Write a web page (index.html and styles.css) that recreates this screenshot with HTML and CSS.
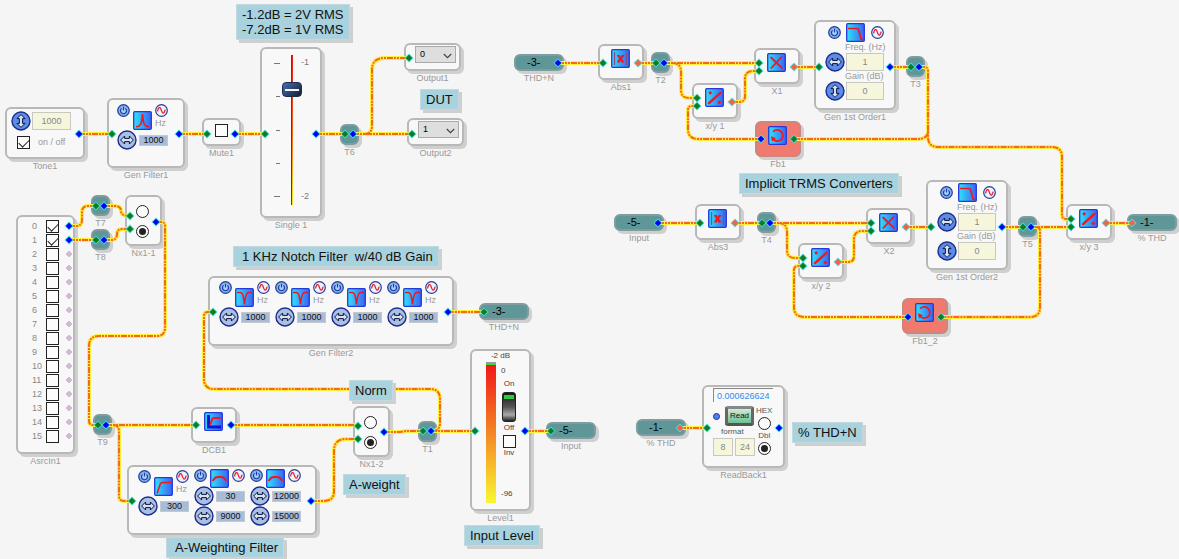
FILE: index.html
```html
<!DOCTYPE html>
<html lang="en">
<head>
<meta charset="utf-8">
<title>Signal schematic</title>
<link rel="stylesheet" href="styles.css">
</head>
<body>
<svg class="defs" aria-hidden="true">
  <defs>
    <linearGradient id="sq" x1="0" y1="0" x2="1" y2="0"><stop offset="0" stop-color="#2fe4f8"/><stop offset="1" stop-color="#3c62f4"/></linearGradient>
    <radialGradient id="pw"><stop offset="0" stop-color="#b4dcfa"/><stop offset="1" stop-color="#6aa4ee"/></radialGradient>
    <symbol id="power" viewBox="0 0 13 13"><circle cx="6.5" cy="6.5" r="5.8" fill="url(#pw)" stroke="#2a3c96" stroke-width="1.2"/><path d="M4.6 4.4a3 3 0 1 0 3.8 0M6.5 2.8v3.6" fill="none" stroke="#20389c" stroke-width="1.1"/></symbol>
    <symbol id="sine" viewBox="0 0 13 13"><circle cx="6.5" cy="6.5" r="5.8" fill="#eaf2ff" stroke="#2a3c96" stroke-width="1.2"/><path d="M2.6 7.4C3.2 3 5 2.4 6 5.4S8.4 12 10.2 5.6" fill="none" stroke="#f01c24" stroke-width="1.3"/></symbol>
    <symbol id="horiz" viewBox="0 0 20 20"><circle cx="10" cy="10" r="9" stroke="#1c2c8e" stroke-width="1.4"/><path d="M3.6 10 7.6 6v2.400h4.800V6l4 4-4 4v-2.400H7.600V14Z" fill="#d4e2f4" stroke="#0c1440" stroke-width="1"/></symbol>
    <symbol id="vert" viewBox="0 0 20 20"><circle cx="10" cy="10" r="9" stroke="#1c2c8e" stroke-width="1.4"/><path d="M10 3.600 14 7.600h-2.400v4.800H14l-4 4-4-4h2.400V7.600H6Z" fill="#d4e2f4" stroke="#0c1440" stroke-width="1"/></symbol>
    <symbol id="tile" viewBox="0 0 19 19"><rect x=".7" y=".7" width="17.6" height="17.6" rx="1" fill="url(#sq)" stroke="#2438dc" stroke-width="1.3"/></symbol>
    <symbol id="peak" viewBox="0 0 19 19"><use href="#tile"/><path d="M3 15.800c4.500-.3 5.700-2 6.500-12.800.8 10.800 2 12.500 6.500 12.800" fill="none" stroke="#f01820" stroke-width="1.6"/></symbol>
    <symbol id="notch" viewBox="0 0 19 19"><use href="#tile"/><path d="M2 4.500h3.600c2 0 3 3 3.900 12 .9-9 1.900-12 3.900-12H17" fill="none" stroke="#f01820" stroke-width="1.700"/></symbol>
    <symbol id="highpass" viewBox="0 0 19 19"><use href="#tile"/><path d="M3 16.500 6.500 6.600Q7 5.500 8.500 5.500H17" fill="none" stroke="#f01820" stroke-width="1.600"/></symbol>
    <symbol id="arch" viewBox="0 0 19 19"><use href="#tile"/><path d="M2.500 12Q5 8 7.500 8h4Q14 8 16.500 12" fill="none" stroke="#f01820" stroke-width="1.800"/></symbol>
    <symbol id="lowpass" viewBox="0 0 19 19"><use href="#tile"/><path d="M2 5.500h8.500Q12.500 5.500 13 8l2 8 2 .8" fill="none" stroke="#f01820" stroke-width="1.700"/></symbol>
    <symbol id="dcb" viewBox="0 0 19 19"><use href="#tile"/><path d="M4.500 3v12H17" fill="none" stroke="#0a14d4" stroke-width="3"/><path d="M6 13.500 8.200 7Q8.500 6 10 6h6.500" fill="none" stroke="#f01820" stroke-width="2"/></symbol>
    <symbol id="abs" viewBox="0 0 19 19"><use href="#tile"/><path d="M3.500 3v13M15.500 3v13" stroke="#80508c" stroke-width="1.300"/><path d="M7.200 6.500 12 13M12 6.500 7.200 13" stroke="#f01820" stroke-width="2.200"/><path d="M6 6.500h3M10.500 6.500h2.700M6 13h2.700M10.300 13h3" stroke="#f01820" stroke-width="1.200"/></symbol>
    <symbol id="times" viewBox="0 0 19 19"><use href="#tile"/><path d="M3.500 4 15.500 15.500M15 3.500 3.800 15.500" stroke="#f01820" stroke-width="1.800"/></symbol>
    <symbol id="divide" viewBox="0 0 19 19"><use href="#tile"/><path d="M4 15.200 15.500 4.800" stroke="#f01820" stroke-width="2.400" stroke-linecap="round"/><circle cx="5.200" cy="4.800" r="1.600" fill="#f01820"/><circle cx="14.300" cy="14.300" r="1.600" fill="#f01820"/></symbol>
    <symbol id="loop" viewBox="0 0 19 19"><use href="#tile"/><path d="M5.300 5.600a5.600 5.600 0 1 1-.6 7.200" fill="none" stroke="#f01820" stroke-width="1.700"/><path d="M2.800 10.200 8 12.200 4 15.600Z" fill="#f01820"/></symbol>
    <symbol id="chev" viewBox="0 0 9 6"><path d="M.8 1 4.500 4.700 8.200 1" fill="none" stroke="#444" stroke-width="1.200"/></symbol>
    <path id="pin" d="M0-4.500 4.500 0 0 4.500-4.500 0Z"/>
    <path id="core" d="M0-3 3 0 0 3-3 0Z" stroke-width="1"/>
    <g id="g"><use href="#pin" fill="#38dcd0"/><use href="#core" fill="#147a1c" stroke="#147a1c" stroke-opacity=".5"/></g>
    <g id="b"><use href="#pin" fill="#38d8e8"/><use href="#core" fill="#0000fa" stroke="#0000fa" stroke-opacity=".5"/></g>
    <g id="r"><use href="#pin" fill="#60d4cc"/><use href="#core" fill="#f4604c" stroke="#f4604c" stroke-opacity=".5"/></g>
    <use id="l" href="#core" fill="#d2b8d4" stroke="#d2b8d4"/>
    <g id="wires">
      <path d="M79 134H112M179 134H207M235 134H265M316 134H345M353 134H412"/>
      <path d="M364 134Q372 134 372 126V70Q372 58 384 58H409"/>
      <path d="M69 226H76Q82 226 82 220V212Q82 206 88 206H96M69 240H96"/>
      <path d="M104 206H115Q121 206 121 211 121 216 130 216M104 240H111Q117 240 117 234 117 229 122 229H130"/>
      <path d="M156 222H161Q165 222 165 226V328Q165 336 157 336H99Q89 336 89 346V421Q89 425 93 425H98"/>
      <path d="M106 425H196M231 425H358M113 425Q119 425 119 431V496Q119 501 124 501H132"/>
      <path d="M311 501H324Q334 501 334 491V451Q334 439 346 439H358M384 432H400L406 431H423"/>
      <path d="M431 431H475M525 431H551M432 431Q440 431 440 423V399Q440 389 430 389H214Q204 389 204 379V316Q204 312 208 312H213M448 312H484"/>
      <path d="M558 63H603M638 63H656M664 63H759M672 63Q681 63 681 72V90Q681 98 689 98H697"/>
      <path d="M732 102H739Q745 102 745 96V79Q745 71 753 71H759M794 67H819M890 67H911"/>
      <path d="M919 67H924Q928 67 928 71V137Q928 147 938 147H1052Q1062 147 1062 157V215Q1062 219 1066 219H1071"/>
      <path d="M794 139H918Q928 139 928 131M761 139H698Q688 139 688 129V110Q688 106 692 106H697"/>
      <path d="M658 223H700M735 223H762M770 223H871M778 223Q787 223 787 232V250Q787 258 795 258H803"/>
      <path d="M838 262H848Q854 262 854 256V239Q854 231 862 231H871M906 227H931M1002 227H1023M1031 227H1071M1106 223H1132"/>
      <path d="M1036 227Q1040 227 1040 231V307Q1040 317 1030 317H941M908 317H804Q794 317 794 307V270Q794 266 798 266H803"/>
      <path d="M680 428H707"/>
    </g>
  </defs>
</svg>

<main class="canvas">
  <!-- Left: sources and level -->
  <section class="node tone1">
    <div class="box tone">
      <div class="line"><button class="knob full" aria-label="Tune Tone1"><svg><use href="#vert"/></svg></button><input class="field wide" value="1000" aria-label="Tone1 frequency"></div>
      <label class="line toggle"><input class="check" type="checkbox" checked><span>on / off</span></label>
    </div>
    <h2>Tone1</h2>
  </section>

  <section class="node gf1">
    <div class="box bands roomy">
      <div class="band">
        <div class="head"><button class="mini" aria-label="Power"><svg><use href="#power"/></svg></button><svg class="ico low"><use href="#peak"/></svg><div class="side"><button class="mini" aria-label="Sweep"><svg><use href="#sine"/></svg></button><span>Hz</span></div></div>
        <div class="line"><button class="knob" aria-label="Tune"><svg><use href="#horiz"/></svg></button><input class="value" value="1000" aria-label="Frequency"></div>
      </div>
    </div>
    <h2>Gen Filter1</h2>
  </section>

  <section class="node mute1"><div class="box center"><input class="check" type="checkbox" aria-label="Mute"></div><h2>Mute1</h2></section>

  <section class="node single1">
    <div class="box fader">
      <div class="ticks"><i class="long"></i><i></i><i></i><i></i><i class="long"></i></div>
      <input class="slide" type="range" min="-2" max="-1" step="0.1" value="-1.2" aria-label="Single 1 level">
      <div class="marks"><span>-1</span><span>-2</span></div>
    </div>
    <h2>Single 1</h2>
  </section>

  <section class="node t t6"><div class="box"></div><h2>T6</h2></section>
  <section class="node output1"><div class="box out"><div class="pick"><select aria-label="Output1 channel"><option>0</option></select><svg><use href="#chev"/></svg></div></div><h2>Output1</h2></section>
  <section class="node output2"><div class="box out"><div class="pick"><select aria-label="Output2 channel"><option>1</option></select><svg><use href="#chev"/></svg></div></div><h2>Output2</h2></section>

  <section class="node asrc">
    <div class="box list">
      <label><span>0</span><input class="check" type="checkbox" checked></label>
      <label><span>1</span><input class="check" type="checkbox" checked></label>
      <label><span>2</span><input class="check" type="checkbox"></label>
      <label><span>3</span><input class="check" type="checkbox"></label>
      <label><span>4</span><input class="check" type="checkbox"></label>
      <label><span>5</span><input class="check" type="checkbox"></label>
      <label><span>6</span><input class="check" type="checkbox"></label>
      <label><span>7</span><input class="check" type="checkbox"></label>
      <label><span>8</span><input class="check" type="checkbox"></label>
      <label><span>9</span><input class="check" type="checkbox"></label>
      <label><span>10</span><input class="check" type="checkbox"></label>
      <label><span>11</span><input class="check" type="checkbox"></label>
      <label><span>12</span><input class="check" type="checkbox"></label>
      <label><span>13</span><input class="check" type="checkbox"></label>
      <label><span>14</span><input class="check" type="checkbox"></label>
      <label><span>15</span><input class="check" type="checkbox"></label>
    </div>
    <h2>AsrcIn1</h2>
  </section>

  <section class="node t t7"><div class="box"></div><h2>T7</h2></section>
  <section class="node t t8"><div class="box"></div><h2>T8</h2></section>
  <section class="node nx nx1"><div class="box"><input class="radio" type="radio" name="nx1" aria-label="Input A"><input class="radio" type="radio" name="nx1" aria-label="Input B" checked></div><h2>Nx1-1</h2></section>
  <section class="node nx nx2"><div class="box"><input class="radio" type="radio" name="nx2" aria-label="Input A"><input class="radio" type="radio" name="nx2" aria-label="Input B" checked></div><h2>Nx1-2</h2></section>

  <section class="node gf2">
    <div class="box bands">
      <div class="band">
        <div class="head"><button class="mini" aria-label="Power"><svg><use href="#power"/></svg></button><svg class="ico low"><use href="#notch"/></svg><div class="side"><button class="mini" aria-label="Sweep"><svg><use href="#sine"/></svg></button><span>Hz</span></div></div>
        <div class="line"><button class="knob" aria-label="Tune"><svg><use href="#horiz"/></svg></button><input class="value" value="1000" aria-label="Frequency 1"></div>
      </div>
      <div class="band">
        <div class="head"><button class="mini" aria-label="Power"><svg><use href="#power"/></svg></button><svg class="ico low"><use href="#notch"/></svg><div class="side"><button class="mini" aria-label="Sweep"><svg><use href="#sine"/></svg></button><span>Hz</span></div></div>
        <div class="line"><button class="knob" aria-label="Tune"><svg><use href="#horiz"/></svg></button><input class="value" value="1000" aria-label="Frequency 2"></div>
      </div>
      <div class="band">
        <div class="head"><button class="mini" aria-label="Power"><svg><use href="#power"/></svg></button><svg class="ico low"><use href="#notch"/></svg><div class="side"><button class="mini" aria-label="Sweep"><svg><use href="#sine"/></svg></button><span>Hz</span></div></div>
        <div class="line"><button class="knob" aria-label="Tune"><svg><use href="#horiz"/></svg></button><input class="value" value="1000" aria-label="Frequency 3"></div>
      </div>
      <div class="band">
        <div class="head"><button class="mini" aria-label="Power"><svg><use href="#power"/></svg></button><svg class="ico low"><use href="#notch"/></svg><div class="side"><button class="mini" aria-label="Sweep"><svg><use href="#sine"/></svg></button><span>Hz</span></div></div>
        <div class="line"><button class="knob" aria-label="Tune"><svg><use href="#horiz"/></svg></button><input class="value" value="1000" aria-label="Frequency 4"></div>
      </div>
    </div>
    <h2>Gen Filter2</h2>
  </section>

  <section class="node pill thdn-out"><div class="box">-3-</div><h2>THD+N</h2></section>
  <section class="node t t9"><div class="box"></div><h2>T9</h2></section>
  <section class="node op dcb1"><div class="box"><svg class="ico"><use href="#dcb"/></svg></div><h2>DCB1</h2></section>
  <section class="node t t1"><div class="box"></div><h2>T1</h2></section>

  <section class="node aw">
    <div class="box bands">
      <div class="band">
        <div class="head"><button class="mini" aria-label="Power"><svg><use href="#power"/></svg></button><svg class="ico low"><use href="#highpass"/></svg><div class="side"><button class="mini" aria-label="Sweep"><svg><use href="#sine"/></svg></button><span>Hz</span></div></div>
        <div class="line"><button class="knob" aria-label="Tune"><svg><use href="#horiz"/></svg></button><input class="value" value="300" aria-label="High pass frequency"></div>
      </div>
      <div class="band">
        <div class="head short"><button class="mini" aria-label="Power"><svg><use href="#power"/></svg></button><svg class="ico"><use href="#arch"/></svg><button class="mini" aria-label="Sweep"><svg><use href="#sine"/></svg></button></div>
        <div class="line"><button class="knob" aria-label="Tune low"><svg><use href="#horiz"/></svg></button><input class="value" value="30" aria-label="Low edge"></div>
        <div class="line"><button class="knob" aria-label="Tune high"><svg><use href="#horiz"/></svg></button><input class="value" value="9000" aria-label="High edge"></div>
      </div>
      <div class="band">
        <div class="head short"><button class="mini" aria-label="Power"><svg><use href="#power"/></svg></button><svg class="ico"><use href="#arch"/></svg><button class="mini" aria-label="Sweep"><svg><use href="#sine"/></svg></button></div>
        <div class="line"><button class="knob" aria-label="Tune low"><svg><use href="#horiz"/></svg></button><input class="value" value="12000" aria-label="Low edge"></div>
        <div class="line"><button class="knob" aria-label="Tune high"><svg><use href="#horiz"/></svg></button><input class="value" value="15000" aria-label="High edge"></div>
      </div>
    </div>
  </section>

  <section class="node level1">
    <div class="box level">
      <p>-2 dB</p>
      <div class="body">
        <div class="meter"></div>
        <div class="ctl">
          <span class="max">0</span>
          <span>On</span>
          <button class="rocker" aria-label="Level on or off"></button>
          <span>Off</span>
          <label><input class="check" type="checkbox">Inv</label>
          <span class="min">-96</span>
        </div>
      </div>
    </div>
    <h2>Level1</h2>
  </section>
  <section class="node pill input-out"><div class="box">-5-</div><h2>Input</h2></section>

  <!-- Right: implicit converters -->
  <section class="node pill thdn-in"><div class="box">-3-</div><h2>THD+N</h2></section>
  <section class="node op abs1"><div class="box"><svg class="ico"><use href="#abs"/></svg></div><h2>Abs1</h2></section>
  <section class="node t t2"><div class="box"></div><h2>T2</h2></section>
  <section class="node op xy1"><div class="box"><svg class="ico"><use href="#divide"/></svg></div><h2>x/y 1</h2></section>
  <section class="node op x1"><div class="box"><svg class="ico"><use href="#times"/></svg></div><h2>X1</h2></section>
  <section class="node gfo1">
    <div class="box order">
      <button class="mini" aria-label="Power"><svg><use href="#power"/></svg></button>
      <div class="top"><svg class="ico"><use href="#lowpass"/></svg><button class="mini" aria-label="Sweep"><svg><use href="#sine"/></svg></button></div>
      <label for="f1">Freq. (Hz)</label>
      <button class="knob full" aria-label="Tune frequency"><svg><use href="#horiz"/></svg></button><input class="field" id="f1" value="1">
      <label for="g1">Gain (dB)</label>
      <button class="knob full" aria-label="Tune gain"><svg><use href="#vert"/></svg></button><input class="field" id="g1" value="0">
    </div>
    <h2>Gen 1st Order1</h2>
  </section>
  <section class="node t t3"><div class="box"></div><h2>T3</h2></section>
  <section class="node op fb fb1"><div class="box"><svg class="ico"><use href="#loop"/></svg></div><h2>Fb1</h2></section>

  <section class="node pill input-in"><div class="box">-5-</div><h2>Input</h2></section>
  <section class="node op abs3"><div class="box"><svg class="ico"><use href="#abs"/></svg></div><h2>Abs3</h2></section>
  <section class="node t t4"><div class="box"></div><h2>T4</h2></section>
  <section class="node op xy2"><div class="box"><svg class="ico"><use href="#divide"/></svg></div><h2>x/y 2</h2></section>
  <section class="node op x2"><div class="box"><svg class="ico"><use href="#times"/></svg></div><h2>X2</h2></section>
  <section class="node gfo2">
    <div class="box order">
      <button class="mini" aria-label="Power"><svg><use href="#power"/></svg></button>
      <div class="top"><svg class="ico"><use href="#lowpass"/></svg><button class="mini" aria-label="Sweep"><svg><use href="#sine"/></svg></button></div>
      <label for="f2">Freq. (Hz)</label>
      <button class="knob full" aria-label="Tune frequency"><svg><use href="#horiz"/></svg></button><input class="field" id="f2" value="1">
      <label for="g2">Gain (dB)</label>
      <button class="knob full" aria-label="Tune gain"><svg><use href="#vert"/></svg></button><input class="field" id="g2" value="0">
    </div>
    <h2>Gen 1st Order2</h2>
  </section>
  <section class="node t t5"><div class="box"></div><h2>T5</h2></section>
  <section class="node op fb fb2"><div class="box"><svg class="ico"><use href="#loop"/></svg></div><h2>Fb1_2</h2></section>
  <section class="node op xy3"><div class="box"><svg class="ico"><use href="#divide"/></svg></div><h2>x/y 3</h2></section>
  <section class="node pill thd-out"><div class="box">-1-</div><h2>% THD</h2></section>

  <section class="node pill thd-in"><div class="box">-1-</div><h2>% THD</h2></section>
  <section class="node readback">
    <div class="box rb">
      <output>0.000626624</output>
      <div class="cols">
        <div class="left">
          <div class="line"><i class="led"></i><button class="read">Read</button></div>
          <span>format</span>
          <div class="line fmt"><input class="field" value="8" aria-label="Integer digits"><input class="field" value="24" aria-label="Fraction digits"></div>
        </div>
        <div class="right">
          <label>HEX<input class="radio" type="radio" name="fmt"></label>
          <label>Dbl<input class="radio" type="radio" name="fmt" checked></label>
        </div>
      </div>
    </div>
    <h2>ReadBack1</h2>
  </section>

  <svg class="overlay" aria-hidden="true">
    <use href="#wires" class="glow"/>
    <use href="#wires" class="dash"/>
    <g>
      <use href="#b" x="79" y="134"/><use href="#g" x="112" y="134"/><use href="#b" x="179" y="134"/><use href="#g" x="207" y="134"/><use href="#b" x="235" y="134"/><use href="#g" x="265" y="134"/><use href="#b" x="316" y="134"/><use href="#g" x="345" y="134"/><use href="#b" x="353" y="134"/><use href="#g" x="409" y="58"/><use href="#g" x="412" y="134"/>
      <use href="#b" x="69" y="226"/><use href="#b" x="69" y="240"/>
      <use href="#l" x="69" y="254"/><use href="#l" x="69" y="268"/><use href="#l" x="69" y="282"/><use href="#l" x="69" y="296"/><use href="#l" x="69" y="310"/><use href="#l" x="69" y="324"/><use href="#l" x="69" y="338"/><use href="#l" x="69" y="352"/><use href="#l" x="69" y="366"/><use href="#l" x="69" y="380"/><use href="#l" x="69" y="394"/><use href="#l" x="69" y="408"/><use href="#l" x="69" y="422"/><use href="#l" x="69" y="436"/>
      <use href="#g" x="96" y="206"/><use href="#b" x="104" y="206"/><use href="#g" x="96" y="240"/><use href="#b" x="104" y="240"/><use href="#g" x="130" y="216"/><use href="#g" x="130" y="229"/><use href="#b" x="156" y="222"/>
      <use href="#g" x="98" y="425"/><use href="#b" x="106" y="425"/><use href="#g" x="196" y="425"/><use href="#b" x="231" y="425"/><use href="#g" x="132" y="501"/><use href="#b" x="311" y="501"/><use href="#g" x="358" y="426"/><use href="#g" x="358" y="439"/><use href="#b" x="384" y="432"/><use href="#g" x="423" y="431"/><use href="#b" x="431" y="431"/><use href="#g" x="475" y="431"/><use href="#b" x="525" y="431"/><use href="#g" x="551" y="431"/>
      <use href="#g" x="213" y="312"/><use href="#b" x="448" y="312"/><use href="#g" x="484" y="312"/>
      <use href="#b" x="558" y="63"/><use href="#g" x="603" y="63"/><use href="#r" x="638" y="63"/><use href="#g" x="656" y="63"/><use href="#b" x="664" y="63"/><use href="#g" x="697" y="98"/><use href="#g" x="697" y="106"/><use href="#r" x="732" y="102"/><use href="#g" x="759" y="63"/><use href="#g" x="759" y="71"/><use href="#r" x="794" y="67"/><use href="#g" x="819" y="67"/><use href="#b" x="890" y="67"/><use href="#g" x="911" y="67"/><use href="#b" x="919" y="67"/><use href="#b" x="761" y="139"/><use href="#g" x="794" y="139"/>
      <use href="#b" x="658" y="223"/><use href="#g" x="700" y="223"/><use href="#r" x="735" y="223"/><use href="#g" x="762" y="223"/><use href="#b" x="770" y="223"/><use href="#g" x="803" y="258"/><use href="#g" x="803" y="266"/><use href="#r" x="838" y="262"/><use href="#g" x="871" y="223"/><use href="#g" x="871" y="231"/><use href="#r" x="906" y="227"/><use href="#g" x="931" y="227"/><use href="#b" x="1002" y="227"/><use href="#g" x="1023" y="227"/><use href="#b" x="1031" y="227"/><use href="#b" x="908" y="317"/><use href="#g" x="941" y="317"/><use href="#g" x="1071" y="219"/><use href="#g" x="1071" y="227"/><use href="#r" x="1106" y="223"/><use href="#r" x="1132" y="223"/>
      <use href="#r" x="680" y="428"/><use href="#g" x="707" y="428"/><use href="#b" x="779" y="428"/>
    </g>
  </svg>

  <p class="note n-rms">-1.2dB = 2V RMS<br>-7.2dB = 1V RMS</p>
  <p class="note n-dut">DUT</p>
  <p class="note airy n-notch">1 KHz Notch Filter&nbsp; w/40 dB Gain</p>
  <p class="note n-norm">Norm</p>
  <p class="note n-aweight">A-weight</p>
  <p class="note airy n-awf">A-Weighting Filter</p>
  <p class="note n-level">Input Level</p>
  <p class="note n-trms">Implicit TRMS Converters</p>
  <p class="note n-thdn">% THD+N</p>
</main>
</body>
</html>
```
FILE: styles.css
```css
* { box-sizing: border-box; }
body { margin: 0; background: #f5f5f5; font: 9px/11px "Liberation Sans", Arial, sans-serif; color: #999; }
p, h2 { margin: 0; }
button { padding: 0; border: 0; background: none; font: inherit; }
input, select { margin: 0; font: inherit; }
svg { display: block; }
.defs { position: absolute; width: 0; height: 0; }
.canvas { position: relative; min-height: 100vh; overflow: hidden; }

/* Wires and pins */
.overlay { position: absolute; inset: 0; width: 100%; height: 100%; pointer-events: none; }
.glow, .dash { fill: none; }
.glow { stroke: #ffee3c; stroke-width: 4px; }
.dash { stroke: #f26a1c; stroke-width: 2px; stroke-dasharray: 6 1 2 1 2 1; }

/* Nodes */
.node { position: absolute; }
.box { border: 2px solid #b8b8b8; border-radius: 6px; background: #f8f8f8; box-shadow: 3px 3px 0 #cfcfcf; }
.node h2 { margin-top: 2px; font-size: 9px; font-weight: normal; line-height: 11px; text-align: center; white-space: nowrap; color: #999; }
.center { display: flex; align-items: center; justify-content: center; height: 28px; padding-bottom: 3px; }
.line { display: flex; align-items: center; gap: 2px; }

.t { width: 19px; }
.t .box { height: 21px; border-color: #809c9e; background: #5f9799; }
.pill { width: 50px; }
.pill .box { height: 17px; padding-left: 11px; border-color: #809c9e; background: #5f9799; color: #000; font-size: 11px; line-height: 13px; }
.op { width: 46px; }
.op .box { display: flex; justify-content: center; height: 36px; padding: 3px 2px 0 0; }
.fb .box { border-color: #c88880; background: #f07a6e; }
.nx { width: 37px; }
.nx .box { display: flex; flex-direction: column; align-items: center; gap: 7px; height: 51px; padding: 8px 2px 0 0; }

/* Controls */
.ico { width: 19px; height: 19px; flex: none; }
.mini, .mini svg { width: 13px; height: 13px; flex: none; }
.knob, .knob svg { width: 20px; height: 20px; flex: none; fill: #a9c0e2; }
.full svg { fill: #5c8ce6; }
.field { width: 38px; height: 18px; padding: 0; border: 1px solid #c8c8c0; background: #f6f6dc; color: #888; text-align: center; }
.value { width: 29px; height: 11px; padding: 0; border: 1px solid #c4c8d0; background: #a8bcd8; color: #111; text-align: center; }
.check, .radio { appearance: none; flex: none; width: 13px; height: 13px; border: 1px solid #222; background: #fcfcfc; }
.check:checked::after { content: ""; display: block; width: 9px; height: 5px; margin: 2px 1px; border: solid #222; border-width: 0 0 1px 1px; transform: rotate(-45deg); }
.radio { display: grid; place-items: center; border-radius: 50%; }
.radio:checked::after { content: ""; width: 7px; height: 7px; border-radius: 50%; background: #222; }

.tone { height: 52px; padding: 2px 0 0 4px; }
.tone .line { gap: 1px; }
.tone .field { width: 39px; }
.tone .toggle { gap: 8px; padding: 5px 0 0 6px; }

.bands { display: flex; gap: 4px; height: 70px; padding: 2px 9px; }
.roomy { padding: 3px 8px; }
.band { width: 52px; }
.head { display: flex; gap: 3px; height: 27px; padding-top: 1px; }
.head .low { align-self: flex-end; }
.side { display: flex; flex-direction: column; }
.side span { margin-top: 1px; }
.short { height: 17px; padding: 0; }

.fader { display: flex; height: 171px; padding: 6px 0 0 12px; }
.ticks { display: flex; flex-direction: column; align-items: flex-end; justify-content: space-between; width: 6px; height: 134px; margin-top: 8px; }
.ticks i { width: 4px; height: 1px; background: #777; }
.ticks .long { width: 6px; }
.slide { appearance: none; writing-mode: vertical-lr; direction: rtl; width: 20px; height: 150px; margin-left: 2px; background: linear-gradient(90deg, transparent 9px, #444 9px, #444 10px, transparent 10px), linear-gradient(#f01818, #f86018 50%, #fcf020) 10px 0 / 1px 100% no-repeat; }
.slide::-webkit-slider-thumb { appearance: none; width: 20px; height: 15px; border: 1px solid #1c2c4c; border-radius: 4px; background: linear-gradient(#f4f4f4, #f4f4f4) center / 14px 2px no-repeat, linear-gradient(135deg, #4470b4, #141c34); }
.marks { display: flex; flex-direction: column; justify-content: space-between; height: 145px; margin: 2px 0 0 -1px; color: #777; }

.out { height: 28px; padding: 1px 0 0 9px; }
.pick { position: relative; width: 41px; }
.pick select { appearance: none; display: block; width: 41px; height: 17px; padding: 0 4px; border: 1px solid #aaa; border-radius: 0; background: #dedede; color: #000; font-size: 9px; }
.pick svg { position: absolute; right: 4px; top: 7px; width: 9px; height: 6px; pointer-events: none; }

.list { height: 239px; padding: 2px 0 0 14px; }
.list label { display: flex; align-items: center; height: 14px; }
.list span { width: 14px; color: #888; }

.level { height: 162px; color: #444; font-size: 8px; line-height: 10px; }
.level p { text-align: center; }
.body { display: flex; gap: 4px; padding: 1px 0 0 14px; }
.meter { width: 10px; height: 141px; background: linear-gradient(#999 1px, #30e030 1px, #30e030 3px, #f01818 3px, #f8f830); }
.ctl { display: flex; flex-direction: column; align-items: center; width: 18px; padding-top: 4px; }
.ctl .max, .ctl .min { align-self: flex-start; padding-left: 1px; }
.ctl .max { margin-bottom: 3px; }
.ctl .min { margin-top: auto; margin-bottom: 4px; }
.rocker { width: 14px; height: 30px; margin: 3px 0 1px; border: 1px solid #222; border-radius: 3px; background: linear-gradient(#30c840, #30c840) center 2px / 10px 4px no-repeat, linear-gradient(#181818, #555 50%, #aaa 78%, #222); }
.ctl label { display: flex; flex-direction: column; align-items: center; padding-top: 2px; }

.order { display: grid; grid-template-columns: 20px 40px; align-content: start; align-items: center; height: 90px; padding: 1px 0 0 9px; }
.order > .mini { margin-left: 3px; }
.order .top { display: flex; align-items: center; gap: 6px; padding-left: 1px; }
.order label { grid-column: 2; white-space: nowrap; }
.order .field { margin-left: 1px; }
.order .knob { margin: -1px 0; }

.rb { height: 83px; padding: 1px 9px; color: #555; font-size: 8px; line-height: 10px; }
.rb output { display: block; width: 60px; height: 14px; padding: 2px 3px; border: solid #888; border-width: 1px 0 0 1px; color: #2e8cf0; font-size: 9px; }
.cols { display: flex; gap: 1px; padding-top: 4px; }
.left { width: 42px; }
.left span { display: block; margin: 1px 0; padding-left: 8px; }
.led { width: 7px; height: 7px; margin-right: 3px; border: 1px solid #1c2c9c; border-radius: 50%; background: #5080f0; }
.read { width: 29px; height: 20px; border: 3px solid #666; border-top-color: #888; border-bottom-color: #555; border-radius: 3px; background: linear-gradient(#d0ecd8, #6cc090); color: #111; font-size: 8px; line-height: 12px; }
.fmt .field { width: 20px; font-size: 9px; }
.right label { display: flex; flex-direction: column; align-items: center; gap: 1px; margin-bottom: 1px; }

/* Notes */
.note { position: absolute; padding: 2px 5px; border: 1px solid #c4d8e0; background: #a8d2de; box-shadow: 3px 3px 0 #cfcfcf; color: #111; font-size: 13px; line-height: 15px; white-space: nowrap; }
.airy { padding: 2px 5px 2px 8px; }

/* Placement on the canvas */
.tone1 { left: 5px; top: 107px; width: 80px; }
.gf1 { left: 107px; top: 98px; width: 78px; }
.mute1 { left: 202px; top: 118px; width: 39px; }
.single1 { left: 260px; top: 47px; width: 62px; }
.t6 { left: 340px; top: 124px; }
.output1 { left: 404px; top: 43px; width: 57px; }
.output2 { left: 407px; top: 118px; width: 57px; }
.asrc { left: 16px; top: 215px; width: 59px; }
.t7 { left: 91px; top: 195px; }
.t8 { left: 91px; top: 229px; }
.nx1 { left: 125px; top: 195px; }
.nx2 { left: 353px; top: 406px; }
.gf2 { left: 208px; top: 276px; width: 246px; }
.thdn-out { left: 479px; top: 303px; }
.t9 { left: 93px; top: 414px; }
.dcb1 { left: 191px; top: 407px; }
.t1 { left: 418px; top: 421px; }
.aw { left: 127px; top: 465px; width: 190px; }
.level1 { left: 470px; top: 349px; width: 61px; }
.input-out { left: 546px; top: 422px; }
.thdn-in { left: 514px; top: 54px; }
.abs1 { left: 598px; top: 44px; }
.t2 { left: 651px; top: 52px; }
.xy1 { left: 692px; top: 83px; }
.x1 { left: 754px; top: 48px; }
.gfo1 { left: 814px; top: 20px; width: 82px; }
.t3 { left: 906px; top: 56px; }
.fb1 { left: 755px; top: 121px; }
.input-in { left: 614px; top: 214px; }
.abs3 { left: 695px; top: 204px; }
.t4 { left: 757px; top: 212px; }
.xy2 { left: 798px; top: 243px; }
.x2 { left: 866px; top: 208px; }
.gfo2 { left: 926px; top: 180px; width: 82px; }
.t5 { left: 1018px; top: 216px; }
.fb2 { left: 902px; top: 298px; }
.xy3 { left: 1066px; top: 204px; }
.thd-out { left: 1127px; top: 214px; }
.thd-in { left: 636px; top: 419px; }
.readback { left: 702px; top: 385px; width: 83px; }
.n-rms { left: 236px; top: 4px; }
.n-dut { left: 420px; top: 89px; }
.n-notch { left: 233px; top: 246px; }
.n-norm { left: 349px; top: 380px; }
.n-aweight { left: 343px; top: 474px; }
.n-awf { left: 166px; top: 537px; }
.n-level { left: 464px; top: 525px; }
.n-trms { left: 739px; top: 173px; }
.n-thdn { left: 792px; top: 422px; }
```
